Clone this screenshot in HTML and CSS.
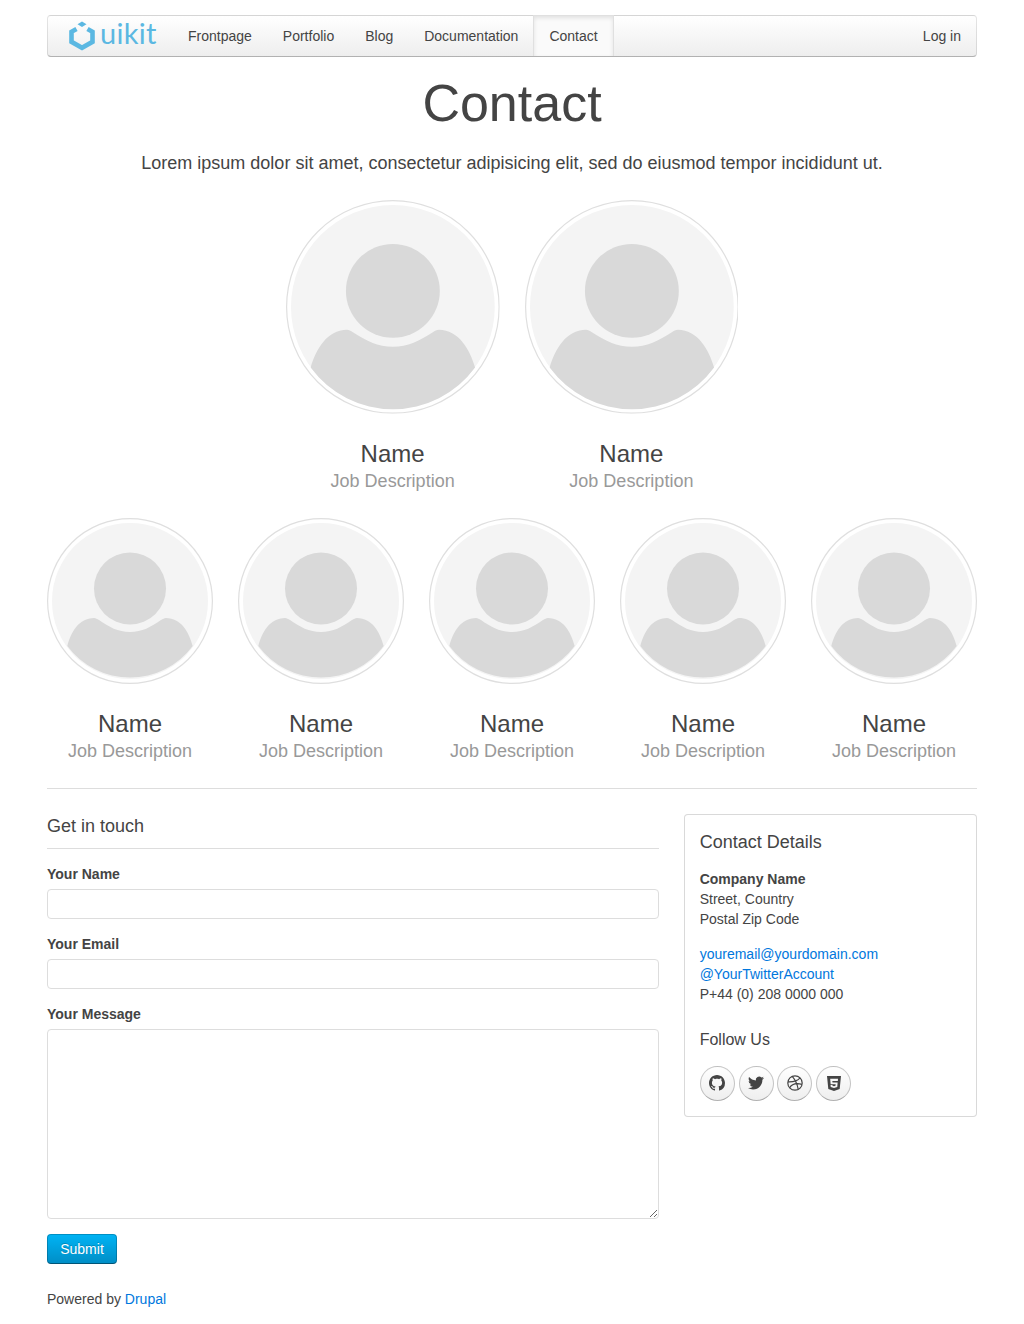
FILE: index.html
```html
<!DOCTYPE html>
<html lang="en">
<head>
<meta charset="utf-8">
<title>Contact</title>
<link rel="stylesheet" href="styles.css">
</head>
<body>
<svg class="defs" width="0" height="0" aria-hidden="true">
  <symbol id="avatar" viewBox="0 0 214 214">
    <circle cx="107" cy="107" r="106.4" fill="#fff" stroke="#dfdfdf" stroke-width="1.2"/>
    <circle cx="107" cy="107" r="102" fill="#f4f4f4"/>
    <circle cx="107" cy="91" r="47" fill="#d9d9d9"/>
    <path d="M24.700 167.700C30 150 41 130 61 130C63 130 65 131 67 132.500C80 141 92 147 107 147C122 147 134 141 147 132.500C149 131 151 130 153 130C173 130 184 150 189.300 167.700A102 102 0 0 1 24.700 167.700Z" fill="#d9d9d9"/>
  </symbol>
  <symbol id="avatar-small" viewBox="0 0 166 166">
    <circle cx="83" cy="83" r="82.400" fill="#fff" stroke="#dfdfdf" stroke-width="1.200"/>
    <circle cx="83" cy="83" r="78" fill="#f4f4f4"/>
    <circle cx="83" cy="70.500" r="36" fill="#d9d9d9"/>
    <path d="M20.300 128C24 114 32 100 47 100C49 100 50 101 52 102C62 109 71 114 83 114C95 114 104 109 114 102C116 101 117 100 119 100C134 100 142 114 145.700 128A78 78 0 0 1 20.300 128Z" fill="#d9d9d9"/>
  </symbol>
</svg>

<header class="navbar">
  <a class="brand" href="#">
    <svg class="brand-mark" width="28" height="30" viewBox="0 0 28 30">
      <path d="M8.500 8L3.500 10.800V20.800L14 26.800L24.500 20.800V10.800L19.500 8" fill="none" stroke="#5bb8e2" stroke-width="4.600"/>
      <path d="M14 .5L18.500 3.200L14 5.900L9.500 3.200Z" fill="#5bb8e2"/>
    </svg>
    <span class="brand-text">uikit</span>
  </a>
  <nav class="nav">
    <a class="nav-link" href="#">Frontpage</a>
    <a class="nav-link" href="#">Portfolio</a>
    <a class="nav-link" href="#">Blog</a>
    <a class="nav-link" href="#">Documentation</a>
    <a class="nav-link is-active" href="#">Contact</a>
  </nav>
  <a class="nav-link nav-right" href="#">Log in</a>
</header>

<main>
  <h1 class="title">Contact</h1>
  <p class="lead">Lorem ipsum dolor sit amet, consectetur adipisicing elit, sed do eiusmod tempor incididunt ut.</p>

  <section class="team team-top">
    <article class="member"><svg class="avatar"><use href="#avatar"/></svg><h2 class="member-name">Name</h2><p class="member-job">Job Description</p></article>
    <article class="member"><svg class="avatar"><use href="#avatar"/></svg><h2 class="member-name">Name</h2><p class="member-job">Job Description</p></article>
  </section>

  <section class="team team-bottom">
    <article class="member"><svg class="avatar"><use href="#avatar-small"/></svg><h2 class="member-name">Name</h2><p class="member-job">Job Description</p></article>
    <article class="member"><svg class="avatar"><use href="#avatar-small"/></svg><h2 class="member-name">Name</h2><p class="member-job">Job Description</p></article>
    <article class="member"><svg class="avatar"><use href="#avatar-small"/></svg><h2 class="member-name">Name</h2><p class="member-job">Job Description</p></article>
    <article class="member"><svg class="avatar"><use href="#avatar-small"/></svg><h2 class="member-name">Name</h2><p class="member-job">Job Description</p></article>
    <article class="member"><svg class="avatar"><use href="#avatar-small"/></svg><h2 class="member-name">Name</h2><p class="member-job">Job Description</p></article>
  </section>

  <hr class="divider">

  <section class="contact">
    <form class="form">
      <h3 class="form-title">Get in touch</h3>
      <label class="field-label" for="name">Your Name</label>
      <input class="field" id="name" type="text">
      <label class="field-label" for="email">Your Email</label>
      <input class="field" id="email" type="email">
      <label class="field-label" for="message">Your Message</label>
      <textarea class="field field-area" id="message"></textarea>
      <button class="submit" type="button">Submit</button>
    </form>

    <aside class="panel">
      <h3 class="panel-title">Contact Details</h3>
      <p class="panel-text"><strong>Company Name</strong><br>Street, Country<br>Postal Zip Code</p>
      <p class="panel-text panel-links"><a href="#">youremail@yourdomain.com</a><br><a href="#">@YourTwitterAccount</a><br>P+44 (0) 208 0000 000</p>
      <h4 class="follow-title">Follow Us</h4>
      <div class="socials">
        <a class="social" href="#" aria-label="GitHub"><svg width="16" height="16" viewBox="0 0 16 16"><path d="M8 0C3.580 0 0 3.580 0 8c0 3.540 2.290 6.530 5.470 7.590.4.070.55-.17.55-.38 0-.19-.01-.82-.01-1.490-2.010.370-2.530-.490-2.690-.940-.09-.230-.48-.940-.82-1.130-.28-.150-.68-.520-.01-.530.630-.01 1.080.580 1.230.820.720 1.210 1.870.870 2.330.660.070-.520.280-.870.510-1.070-1.780-.2-3.640-.890-3.640-3.950 0-.870.310-1.590.820-2.150-.08-.2-.36-1.020.080-2.120 0 0 .670-.21 2.200.820.640-.18 1.320-.27 2-.27.680 0 1.360.090 2 .270 1.530-1.040 2.200-.820 2.200-.820.440 1.100.160 1.920.080 2.120.510.560.820 1.270.820 2.150 0 3.070-1.870 3.750-3.650 3.950.290.250.540.730.540 1.480 0 1.070-.01 1.930-.01 2.200 0 .210.150.460.550.380A8.013 8.013 0 0 0 16 8c0-4.420-3.580-8-8-8z" fill="#444"/></svg></a>
        <a class="social" href="#" aria-label="Twitter"><svg width="16" height="16" viewBox="0 0 24 24"><path d="M23.953 4.570a10 10 0 0 1-2.825.775 4.958 4.958 0 0 0 2.163-2.723c-.951.555-2.005.959-3.127 1.184a4.920 4.920 0 0 0-8.384 4.482C7.690 8.095 4.067 6.130 1.640 3.162a4.822 4.822 0 0 0-.666 2.475c0 1.710.870 3.213 2.188 4.096a4.904 4.904 0 0 1-2.228-.616v.060a4.923 4.923 0 0 0 3.946 4.827 4.996 4.996 0 0 1-2.212.085 4.936 4.936 0 0 0 4.604 3.417 9.867 9.867 0 0 1-6.102 2.105c-.39 0-.779-.023-1.170-.067a13.995 13.995 0 0 0 7.557 2.209c9.053 0 13.998-7.496 13.998-13.985 0-.21 0-.42-.015-.63A9.935 9.935 0 0 0 24 4.590z" fill="#444"/></svg></a>
        <a class="social" href="#" aria-label="Dribbble"><svg width="16" height="16" viewBox="0 0 16 16" fill="none" stroke="#444" stroke-width="1.200"><circle cx="8" cy="8" r="7.200"/><path d="M5.200 1.400C8 4.500 10.300 9 11.200 14.300M1 6.800C6 7 10.500 6 13.100 2.800M2.500 13C4.500 9.500 8.500 7.700 14.900 9.300"/></svg></a>
        <a class="social" href="#" aria-label="HTML5"><svg width="14" height="15" viewBox="0 0 15 16"><path fill-rule="evenodd" d="M0 0H15L13.600 14L7.500 16L1.400 14ZM3.400 3H11.800L11.600 5.200H5.700L5.900 7H11.400L11 11.800L7.500 12.900L4 11.800L3.800 9.600H5.800L5.900 10.500L7.500 11L9.100 10.500L9.300 8.900H3.900Z" fill="#444"/></svg></a>
      </div>
    </aside>
  </section>

  <footer class="footer">Powered by <a href="#">Drupal</a></footer>
</main>
</body>
</html>
```

FILE: styles.css
```css
* { box-sizing: border-box; }

html, body { margin: 0; background: #fff; }

body {
  padding: 15px 47px;
  font: 14px/20px "Liberation Sans", Arial, sans-serif;
  color: #444;
}

a { color: #07d; text-decoration: none; }

.defs { position: absolute; }

/* Navbar */
.navbar {
  display: flex;
  align-items: stretch;
  height: 42px;
  border: 1px solid rgba(0, 0, 0, .1);
  border-bottom-color: rgba(0, 0, 0, .3);
  border-radius: 4px;
  background: linear-gradient(to bottom, #fff, #eee);
  box-shadow: 0 1px 0 rgba(255, 255, 255, .4);
}

.brand {
  display: flex;
  align-items: center;
  width: 124px;
  padding-left: 20px;
  color: #5bb8e2;
}

.brand-mark { flex: none; }

.brand-text {
  margin-top: -6px;
  margin-left: 4px;
  font: 400 29px/40px Lato, "Open Sans", sans-serif;
  letter-spacing: .3px;
}

.nav { display: flex; }

.nav-link {
  display: block;
  height: 41px;
  margin-top: -1px;
  margin-left: -1px;
  padding: 0 15px;
  border: 1px solid transparent;
  border-bottom-width: 0;
  line-height: 40px;
  color: #444;
}

.nav .nav-link:first-child { margin-left: 0; }

.nav-link.is-active {
  background: #fafafa;
  border-color: rgba(0, 0, 0, .1);
  box-shadow: inset 0 2px 4px rgba(0, 0, 0, .1);
}

.nav-right { margin-left: auto; margin-right: -1px; }

/* Heading */
.title {
  margin: 16px 0 0;
  font-size: 52px;
  font-weight: 400;
  line-height: 60px;
  text-align: center;
}

.lead {
  margin: 20px 0 0;
  font-size: 18px;
  line-height: 20px;
  text-align: center;
}

/* Team */
.team { display: grid; gap: 25px; }

.team-top {
  grid-template-columns: repeat(2, 213.750px);
  justify-content: center;
  margin-top: 27px;
}

.team-bottom {
  grid-template-columns: repeat(5, 1fr);
  margin-top: 25px;
}

.member { text-align: center; }

.avatar { display: block; width: 100%; aspect-ratio: 1; }

.member-name {
  margin: 25px 0 0;
  font-size: 24px;
  font-weight: 400;
  line-height: 30px;
}

.member-job {
  margin: 0;
  font-size: 18px;
  line-height: 24px;
  color: #999;
}

.divider {
  height: 1px;
  margin: 25px 0 25px;
  border: 0;
  background: #ddd;
}

/* Contact */
.contact {
  display: grid;
  grid-template-columns: calc((100% + 25px) * 2 / 3 - 25px) 1fr;
  gap: 25px;
  align-items: start;
}

.form { display: flex; flex-direction: column; }

.form-title {
  margin: 0 0 15px;
  padding-bottom: 10px;
  border-bottom: 1px solid #ddd;
  font-size: 18px;
  font-weight: 400;
  line-height: 24px;
}

.field-label {
  margin-bottom: 5px;
  font-weight: 700;
}

.field {
  display: block;
  width: 100%;
  height: 30px;
  margin: 0 0 15px;
  padding: 4px 6px;
  border: 1px solid #ddd;
  border-radius: 4px;
  background: #fff;
  font: inherit;
  color: #444;
}

.field-area { height: 190px; }

.submit {
  align-self: flex-start;
  width: 70px;
  height: 30px;
  padding: 0;
  border: 1px solid rgba(0, 0, 0, .2);
  border-bottom-color: rgba(0, 0, 0, .4);
  border-radius: 4px;
  background: linear-gradient(to bottom, #00b4f5, #008dc5);
  background-origin: border-box;
  font: inherit;
  color: #fff;
  text-shadow: 0 -1px 0 rgba(0, 0, 0, .2);
}

.panel {
  padding: 15px;
  border: 1px solid rgba(0, 0, 0, .15);
  border-radius: 4px;
  background: #fff;
}

.panel-title {
  margin: 0;
  font-size: 18px;
  font-weight: 400;
  line-height: 24px;
}

.panel-text { margin: 15px 0 0; }

.panel-links { margin-top: 15px; }

.follow-title {
  margin: 24px 0 0;
  font-size: 16px;
  font-weight: 400;
  line-height: 24px;
}

.socials {
  display: flex;
  gap: 3.890px;
  margin-top: 14px;
}

.social {
  display: flex;
  align-items: center;
  justify-content: center;
  width: 35px;
  height: 35px;
  border: 1px solid rgba(0, 0, 0, .2);
  border-bottom-color: rgba(0, 0, 0, .3);
  border-radius: 50%;
  background: linear-gradient(to bottom, #fff, #eee);
}

.footer { margin-top: 25px; }
```
